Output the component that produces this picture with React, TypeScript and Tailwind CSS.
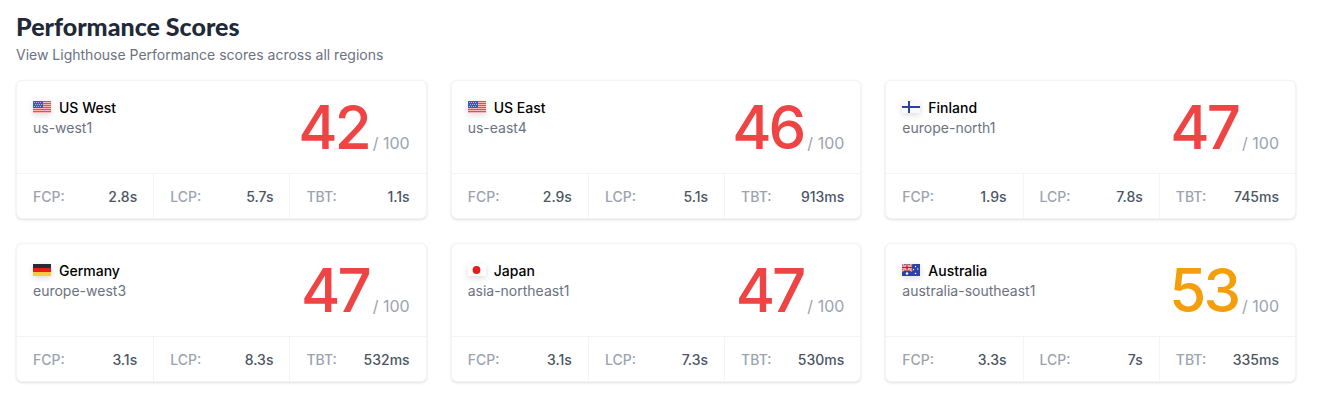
import React from "react";

type Metric = { label: string; value: string };

type Region = {
  name: string;
  id: string;
  score: number;
  Flag: () => React.JSX.Element;
  metrics: Metric[];
};

function metrics(fcp: string, lcp: string, tbt: string): Metric[] {
  return [
    { label: "FCP:", value: fcp },
    { label: "LCP:", value: lcp },
    { label: "TBT:", value: tbt },
  ];
}

function FlagUS() {
  return (
    <svg viewBox="0 0 18 12" className="h-full w-full">
      <rect width="18" height="12" fill="#fff" />
      {[0, 2, 4, 6, 8, 10].map((y) => (
        <rect key={y} y={y} width="18" height="1.4" fill="#f4494c" />
      ))}
      <rect width="10" height="7" fill="#4458b0" />
      {[1, 3, 5].map((y) =>
        [1, 3, 5, 7].map((x) => (
          <rect
            key={`${x}-${y}`}
            x={y === 3 ? x + 1 : x}
            y={y}
            width="1"
            height="1"
            fill="#a9b5e0"
          />
        ))
      )}
    </svg>
  );
}

function FlagFinland() {
  return (
    <svg viewBox="0 0 18 12" className="h-full w-full">
      <rect width="18" height="12" fill="#fafafa" />
      <path d="M6 0h2v12H6zM0 5h18v2H0z" fill="#2e42a5" />
    </svg>
  );
}

function FlagGermany() {
  return (
    <svg viewBox="0 0 18 12" className="h-full w-full">
      <rect width="18" height="12" fill="#fec93d" />
      <rect width="18" height="8" fill="#e31d1c" />
      <rect width="18" height="4" fill="#272a37" />
    </svg>
  );
}

function FlagJapan() {
  return (
    <svg viewBox="0 0 18 12" className="h-full w-full">
      <rect width="18" height="12" fill="#fdfdfd" />
      <circle cx="8.5" cy="6" r="3.9" fill="#e31d1c" />
    </svg>
  );
}

function FlagAustralia() {
  return (
    <svg viewBox="0 0 18 12" className="h-full w-full">
      <rect width="18" height="12" fill="#2e42a5" />
      <path d="M0 0l10 7M10 0L0 7" stroke="#fff" strokeWidth="1.6" />
      <path d="M0 0l10 7M10 0L0 7" stroke="#f50100" strokeWidth="0.6" />
      <path d="M5 0v7M0 3.5h10" stroke="#fff" strokeWidth="2.6" />
      <path d="M5 0v7M0 3.5h10" stroke="#f50100" strokeWidth="1.3" />
      <g fill="#fff">
        <circle cx="5" cy="9.5" r="1.2" />
        <circle cx="13.5" cy="2.5" r="0.7" />
        <circle cx="11.5" cy="5.5" r="0.7" />
        <circle cx="15.8" cy="5" r="0.7" />
        <circle cx="13.5" cy="9.5" r="0.8" />
      </g>
    </svg>
  );
}

const regions: Region[] = [
  { name: "US West", id: "us-west1", score: 42, Flag: FlagUS, metrics: metrics("2.8s", "5.7s", "1.1s") },
  { name: "US East", id: "us-east4", score: 46, Flag: FlagUS, metrics: metrics("2.9s", "5.1s", "913ms") },
  { name: "Finland", id: "europe-north1", score: 47, Flag: FlagFinland, metrics: metrics("1.9s", "7.8s", "745ms") },
  { name: "Germany", id: "europe-west3", score: 47, Flag: FlagGermany, metrics: metrics("3.1s", "8.3s", "532ms") },
  { name: "Japan", id: "asia-northeast1", score: 47, Flag: FlagJapan, metrics: metrics("3.1s", "7.3s", "530ms") },
  { name: "Australia", id: "australia-southeast1", score: 53, Flag: FlagAustralia, metrics: metrics("3.3s", "7s", "335ms") },
];

function RegionCard({ region }: { region: Region }) {
  const { name, id, score, Flag } = region;

  return (
    <article className="rounded-md border border-gray-100 bg-white shadow-sm">
      <div className="flex justify-between p-4">
        <div className="pt-px text-sm">
          <div className="flex items-center gap-2">
            <span className="mb-0.5 h-3 w-[18px] shadow-[0_2px_6px_rgba(0,0,0,0.14)]">
              <Flag />
            </span>
            <h3 className="font-medium text-black">{name}</h3>
          </div>
          <p className="text-[#6b7280]">{id}</p>
        </div>
        <div className="flex items-baseline gap-1">
          <span
            className={`text-6xl leading-none font-medium tracking-tighter ${
              score < 50 ? "text-[#ef4444]" : "text-[#f59e0b]"
            }`}
          >
            {score}
          </span>
          <span className="text-base text-[#9ca3af]">/ 100</span>
        </div>
      </div>
      <dl className="grid grid-cols-3 border-t border-gray-100 text-sm font-medium">
        {region.metrics.map((m) => (
          <div
            key={m.label}
            className="flex justify-between border-l border-gray-100 px-4 pt-[13px] pb-[11px] first:border-l-0"
          >
            <dt className="text-[#9ca3af]">{m.label}</dt>
            <dd className="text-[#4b5563]">{m.value}</dd>
          </div>
        ))}
      </dl>
    </article>
  );
}

export default function App() {
  return (
    <main className="bg-white pt-2.5 pr-7 pb-6 pl-4 font-['Inter',sans-serif]">
      <h2 className="font-['Lato',sans-serif] text-[25px] leading-8 font-black text-[#1f2937]">
        Performance Scores
      </h2>
      <p className="mt-[3px] text-sm text-[#6b7280]">
        View Lighthouse Performance scores across all regions
      </p>
      <div className="mt-[15px] grid grid-cols-3 gap-6">
        {regions.map((region) => (
          <RegionCard key={region.id} region={region} />
        ))}
      </div>
    </main>
  );
}
